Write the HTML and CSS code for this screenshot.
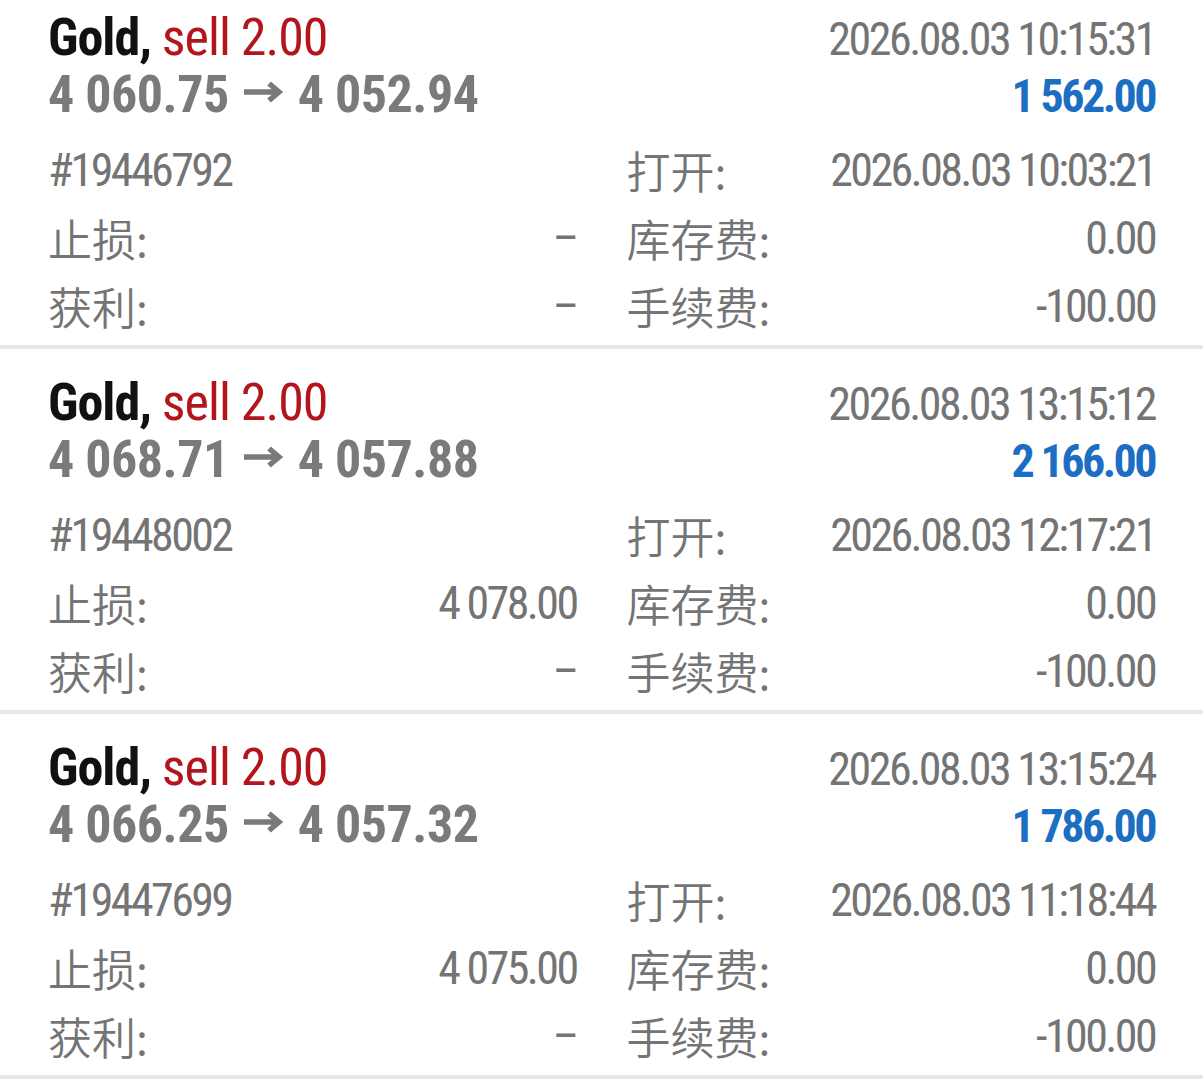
FILE: index.html
```html
<!DOCTYPE html>
<html lang="zh">
<head>
    <meta charset="UTF-8">
    <meta name="viewport" content="width=device-width, initial-scale=1.0">
    <title>历史</title>
    <link rel="stylesheet" href="styles.css">
</head>
<body>

    <main class="deals">

        <!-- Ordre 1 -->
        <section class="deal">
            <div class="deal-head">
                <div class="head-row">
                    <span class="symbol"><b>Gold,</b> <span class="type">sell 2.00</span></span>
                    <span class="time">2026.08.03 10:15:31</span>
                </div>
                <div class="head-row">
                    <span class="prices">4 060.75 <svg class="arrow" viewBox="0 0 40 22"><path d="M0 11H34M25 2.5L35 11L25 19.5"/></svg> 4 052.94</span>
                    <span class="profit">1 562.00</span>
                </div>
            </div>
            <div class="deal-info">
                <div class="cell"><span>#19446792</span></div>
                <div class="cell"><span class="label">打开:</span><span>2026.08.03 10:03:21</span></div>
                <div class="cell"><span class="label">止损:</span><span>–</span></div>
                <div class="cell"><span class="label">库存费:</span><span>0.00</span></div>
                <div class="cell"><span class="label">获利:</span><span>–</span></div>
                <div class="cell"><span class="label">手续费:</span><span>-100.00</span></div>
            </div>
        </section>

        <!-- Ordre 2 -->
        <section class="deal">
            <div class="deal-head">
                <div class="head-row">
                    <span class="symbol"><b>Gold,</b> <span class="type">sell 2.00</span></span>
                    <span class="time">2026.08.03 13:15:12</span>
                </div>
                <div class="head-row">
                    <span class="prices">4 068.71 <svg class="arrow" viewBox="0 0 40 22"><path d="M0 11H34M25 2.5L35 11L25 19.5"/></svg> 4 057.88</span>
                    <span class="profit">2 166.00</span>
                </div>
            </div>
            <div class="deal-info">
                <div class="cell"><span>#19448002</span></div>
                <div class="cell"><span class="label">打开:</span><span>2026.08.03 12:17:21</span></div>
                <div class="cell"><span class="label">止损:</span><span>4 078.00</span></div>
                <div class="cell"><span class="label">库存费:</span><span>0.00</span></div>
                <div class="cell"><span class="label">获利:</span><span>–</span></div>
                <div class="cell"><span class="label">手续费:</span><span>-100.00</span></div>
            </div>
        </section>

        <!-- Ordre 3 -->
        <section class="deal">
            <div class="deal-head">
                <div class="head-row">
                    <span class="symbol"><b>Gold,</b> <span class="type">sell 2.00</span></span>
                    <span class="time">2026.08.03 13:15:24</span>
                </div>
                <div class="head-row">
                    <span class="prices">4 066.25 <svg class="arrow" viewBox="0 0 40 22"><path d="M0 11H34M25 2.5L35 11L25 19.5"/></svg> 4 057.32</span>
                    <span class="profit">1 786.00</span>
                </div>
            </div>
            <div class="deal-info">
                <div class="cell"><span>#19447699</span></div>
                <div class="cell"><span class="label">打开:</span><span>2026.08.03 11:18:44</span></div>
                <div class="cell"><span class="label">止损:</span><span>4 075.00</span></div>
                <div class="cell"><span class="label">库存费:</span><span>0.00</span></div>
                <div class="cell"><span class="label">获利:</span><span>–</span></div>
                <div class="cell"><span class="label">手续费:</span><span>-100.00</span></div>
            </div>
        </section>

    </main>

</body>
</html>
```
FILE: styles.css
```css
/* Couleurs */
:root {
    --text-dark: #111111;
    --text-gray: #747474;
    --price-gray: #7a7a7a;
    --sell-red: #b3151c;
    --profit-blue: #1b6ec2;
    --divider: #e8e8e8;
}

* {
    box-sizing: border-box;
    margin: 0;
    padding: 0;
}

body {
    font-family: "Roboto Condensed", Roboto, "Noto Sans CJK SC", sans-serif;
    font-stretch: condensed;
    background: #ffffff;
    color: var(--text-gray);
    overflow: hidden;
}

/* la liste est un peu défilée vers le haut */
.deals {
    margin-top: -16px;
}

.deal {
    height: 365px;
    padding: 25px 48px 0;
    border-bottom: 4px solid var(--divider);
}

.head-row {
    display: flex;
    justify-content: space-between;
    align-items: baseline;
    line-height: 57px;
    height: 57px;
}

.symbol {
    font-size: 52px;
    letter-spacing: -1px;
    color: var(--sell-red);
}

.symbol b {
    color: var(--text-dark);
    font-weight: 700;
}

.prices {
    font-size: 52px;
    font-weight: 700;
    letter-spacing: -0.5px;
    color: var(--price-gray);
}

.arrow {
    width: 40px;
    height: 22px;
    margin: 0 2px 0 4px;
    vertical-align: 9px;
    fill: none;
    stroke: var(--price-gray);
    stroke-width: 5.5;
}

.time {
    font-size: 46px;
    letter-spacing: -2.5px;
    color: var(--text-gray);
}

.profit {
    font-size: 46px;
    font-weight: 700;
    letter-spacing: -2.5px;
    color: var(--profit-blue);
}

.deal-info {
    display: grid;
    grid-template-columns: 1fr 1fr;
    column-gap: 50px;
    margin-top: 13px;
}

.cell {
    display: flex;
    justify-content: space-between;
    height: 68px;
    line-height: 68px;
    font-size: 46px;
    letter-spacing: -2.6px;
    color: var(--text-gray);
}

.label {
    font-family: "Noto Sans CJK SC", sans-serif;
    font-size: 44px;
    font-weight: 350;
    letter-spacing: 0;
}
```
